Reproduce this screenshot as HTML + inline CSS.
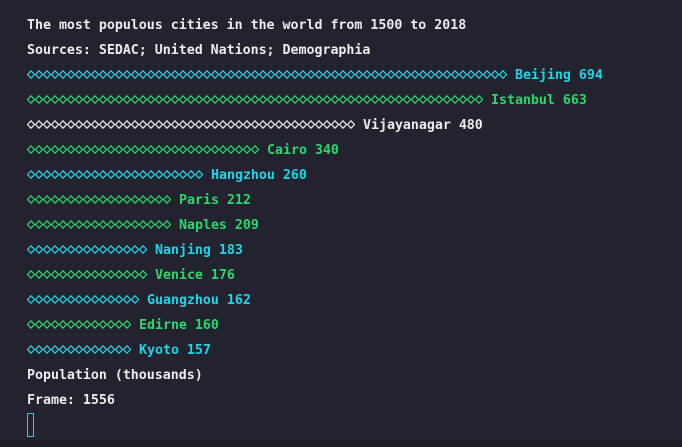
<!DOCTYPE html>
<html><head><meta charset="utf-8"><style>
html,body{margin:0;padding:0;}
body{width:682px;height:447px;background:#22232f;overflow:hidden;position:relative;font-family:"DejaVu Sans Mono","Liberation Mono",monospace;font-weight:bold;font-size:13.3px;color:#ececec;}
.l{position:absolute;left:27px;height:25px;line-height:25px;white-space:pre;letter-spacing:-0.02px}
.l svg{vertical-align:middle;margin-right:8px;position:relative;top:-1px}
.c{color:#1ed6ea}.g{color:#2ad86e}.w{color:#ececec}
.bot{position:absolute;left:0;right:0;top:440px;height:7px;background:#1c1d27;}
.cur{position:absolute;left:27px;top:413px;width:5px;height:22px;border:1px solid #1ed6ea;}
</style></head><body>
<svg width="0" height="0" style="position:absolute">
<defs>
<pattern id="pc" width="8" height="9" patternUnits="userSpaceOnUse"><path d="M0.5 4.5 L4 0.8 L7.5 4.5 L4 8.2 Z" fill="none" stroke="#1ed6ea" stroke-width="1.2"/></pattern>
<pattern id="pg" width="8" height="9" patternUnits="userSpaceOnUse"><path d="M0.5 4.5 L4 0.8 L7.5 4.5 L4 8.2 Z" fill="none" stroke="#2ad86e" stroke-width="1.2"/></pattern>
<pattern id="pw" width="8" height="9" patternUnits="userSpaceOnUse"><path d="M0.5 4.5 L4 0.8 L7.5 4.5 L4 8.2 Z" fill="none" stroke="#ececec" stroke-width="1.2"/></pattern>
</defs></svg>
<div class="l" style="top:13px">The most populous cities in the world from 1500 to 2018</div>
<div class="l" style="top:38px">Sources: SEDAC; United Nations; Demographia</div>
<div class="l c" style="top:63px"><svg width="480" height="9"><rect width="480" height="9" fill="url(#pc)"/></svg>Beijing 694</div>
<div class="l g" style="top:88px"><svg width="456" height="9"><rect width="456" height="9" fill="url(#pg)"/></svg>Istanbul 663</div>
<div class="l w" style="top:113px"><svg width="328" height="9"><rect width="328" height="9" fill="url(#pw)"/></svg>Vijayanagar 480</div>
<div class="l g" style="top:138px"><svg width="232" height="9"><rect width="232" height="9" fill="url(#pg)"/></svg>Cairo 340</div>
<div class="l c" style="top:163px"><svg width="176" height="9"><rect width="176" height="9" fill="url(#pc)"/></svg>Hangzhou 260</div>
<div class="l g" style="top:188px"><svg width="144" height="9"><rect width="144" height="9" fill="url(#pg)"/></svg>Paris 212</div>
<div class="l g" style="top:213px"><svg width="144" height="9"><rect width="144" height="9" fill="url(#pg)"/></svg>Naples 209</div>
<div class="l c" style="top:238px"><svg width="120" height="9"><rect width="120" height="9" fill="url(#pc)"/></svg>Nanjing 183</div>
<div class="l g" style="top:263px"><svg width="120" height="9"><rect width="120" height="9" fill="url(#pg)"/></svg>Venice 176</div>
<div class="l c" style="top:288px"><svg width="112" height="9"><rect width="112" height="9" fill="url(#pc)"/></svg>Guangzhou 162</div>
<div class="l g" style="top:313px"><svg width="104" height="9"><rect width="104" height="9" fill="url(#pg)"/></svg>Edirne 160</div>
<div class="l c" style="top:338px"><svg width="104" height="9"><rect width="104" height="9" fill="url(#pc)"/></svg>Kyoto 157</div>
<div class="l" style="top:363px">Population (thousands)</div>
<div class="l" style="top:388px">Frame: 1556</div>
<div class="cur"></div>
<div class="bot"></div>
</body></html>
